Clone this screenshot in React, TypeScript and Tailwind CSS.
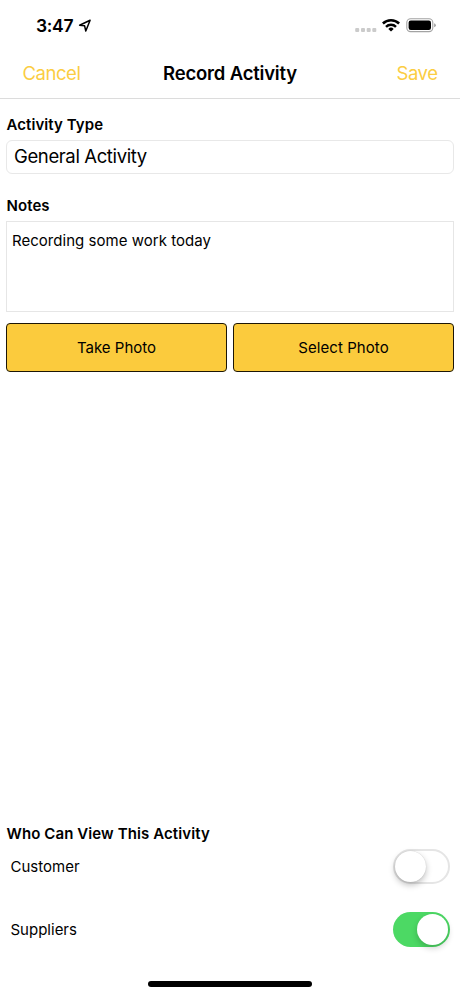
function StatusBar() {
  return (
    <div className="flex h-[50px] items-start justify-between pl-[36px] pr-[24px] pt-[16px]">
      <div className="flex items-center">
        <span className="w-[42px] text-[17.5px] font-semibold leading-[20px] tracking-[-0.3px]">3:47</span>
        <svg width="14" height="14" viewBox="0 0 14 14" fill="none" stroke="#000" strokeWidth="1.5" strokeLinejoin="round">
          <path d="M12.1 1.3 1.6 6.3 6.6 6.8 7.8 12Z" />
        </svg>
      </div>
      <svg width="81" height="18" viewBox="355 16 81 18">
        <g fill="#cbcbcb">
          <rect x="355.2" y="28" width="4" height="4" rx="1" />
          <rect x="361" y="28" width="4" height="4" rx="1" />
          <rect x="366.7" y="28" width="4" height="4" rx="1" />
          <rect x="372.3" y="28" width="4" height="4" rx="1" />
        </g>
        <g fill="none" stroke="#000" strokeWidth="2.5">
          <path d="M382.9 23.5a11.6 11.6 0 0 1 16.2 0" />
          <path d="M386 26.8a7.2 7.2 0 0 1 10 0" />
        </g>
        <path d="M391 31.6 388.3 28.9a3.9 3.9 0 0 1 5.4 0Z" fill="#000" />
        <rect x="406.8" y="18.8" width="26" height="12.8" rx="3.8" fill="#fff" stroke="#a3a3a3" strokeWidth="1.1" />
        <rect x="408.6" y="20.5" width="22.4" height="9.4" rx="2.2" fill="#000" />
        <path d="M434.2 23.2q1.6.6 1.6 2t-1.6 2Z" fill="#9a9a9a" />
      </svg>
    </div>
  );
}

function NavBar() {
  return (
    <header className="flex h-[49px] items-center justify-between border-b border-[#dcdcdc] px-[22.5px] text-[18.5px]">
      <button className="w-[80px] text-left tracking-[-0.45px] text-[#fbcd42]">Cancel</button>
      <h1 className="whitespace-nowrap text-[18.5px] font-semibold tracking-[-0.2px]">Record Activity</h1>
      <button className="w-[80px] text-right tracking-[-0.45px] text-[#fbcd42]">Save</button>
    </header>
  );
}

function Toggle({ on }: { on: boolean }) {
  return on ? (
    <div className="flex h-[35px] w-[57px] items-center justify-end rounded-full bg-[#4cd964] pr-[2px]">
      <div className="size-[31px] rounded-full bg-white shadow-[0_3px_6px_rgba(0,0,0,0.2)]" />
    </div>
  ) : (
    <div className="flex h-[35px] w-[57px] items-center rounded-full border-2 border-[#e5e5e5] bg-white">
      <div className="size-[31px] rounded-full bg-white shadow-[0_3px_6px_rgba(0,0,0,0.25),0_0_1px_rgba(0,0,0,0.2)]" />
    </div>
  );
}

export default function App() {
  return (
    <div className="flex h-[996px] w-[460px] flex-col bg-white font-['Inter','Liberation_Sans',sans-serif] text-black">
      <StatusBar />
      <NavBar />
      <main className="flex flex-1 flex-col px-[6px] pt-[16px] text-[15px]">
        <h2 className="h-[25px] pl-[0.5px] font-semibold leading-[20px] tracking-[0.08px]">Activity Type</h2>
        <div className="flex h-[34px] items-center rounded-[6px] border border-[#e8e8e8] px-[7px] text-[18.5px] tracking-[-0.38px]">
          General Activity
        </div>
        <h2 className="mt-[22px] h-[25px] pl-[0.5px] font-semibold leading-[20px] tracking-[0.08px]">Notes</h2>
        <div className="h-[91px] border border-[#e6e6e6] px-[5px] pt-[9px] leading-[20px] tracking-[0.03px]">Recording some work today</div>
        <div className="mt-[11px] grid grid-cols-[221px_221px] justify-between">
          <button className="h-[49px] rounded-[4px] border border-[#1c1606] bg-[#fbcb3d] pt-[2px]">Take Photo</button>
          <button className="h-[49px] rounded-[4px] border border-[#1c1606] bg-[#fbcb3d] pt-[2px] tracking-[0.08px]">Select Photo</button>
        </div>
        <section className="mt-auto">
          <h2 className="h-[25px] pl-[0.5px] font-semibold leading-[20px] tracking-[0.1px]">Who Can View This Activity</h2>
          <div className="flex h-[35px] items-center justify-between pl-[4.5px] pr-[4px]">
            <span className="pt-[2px]">Customer</span>
            <Toggle on={false} />
          </div>
          <div className="mt-[28px] flex h-[35px] items-center justify-between pl-[4.5px] pr-[4px]">
            <span className="pt-[2px]">Suppliers</span>
            <Toggle on />
          </div>
        </section>
        <div className="mb-[9px] mt-[34px] h-[6px] w-[164px] self-center rounded-full bg-black" />
      </main>
    </div>
  );
}
